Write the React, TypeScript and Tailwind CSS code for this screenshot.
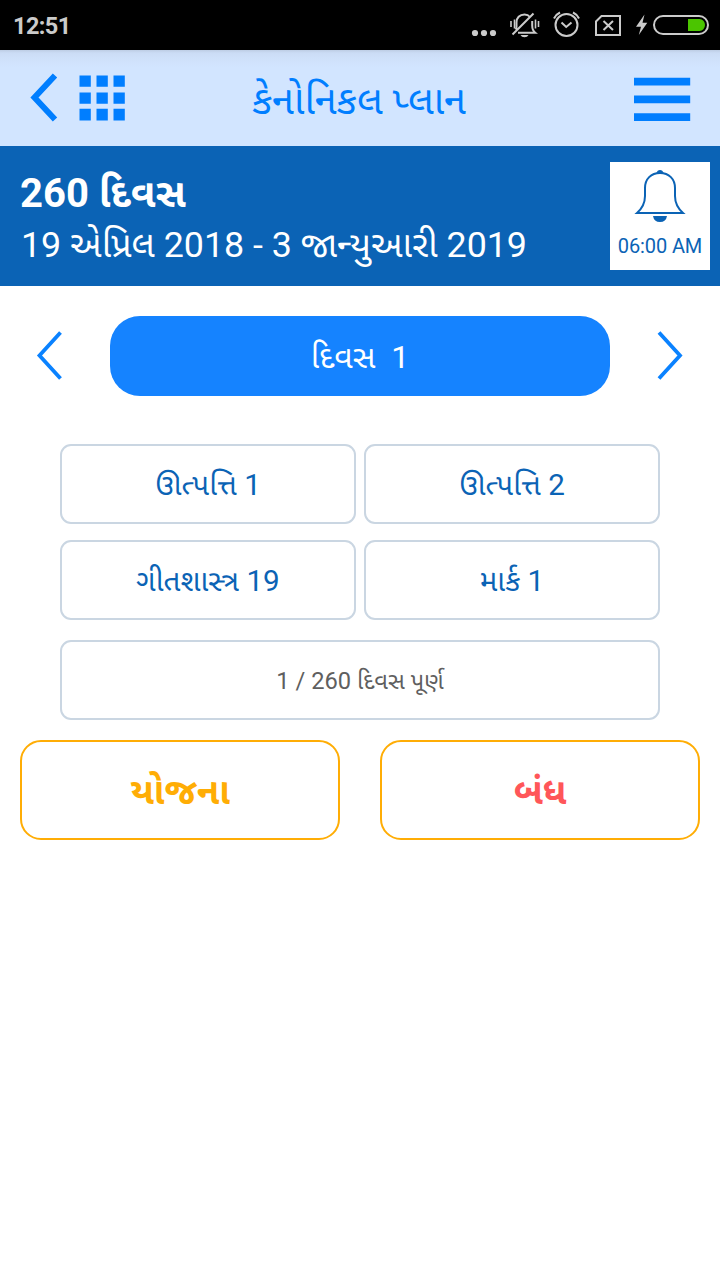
import type { ReactNode } from "react";

function StatusBar() {
  return (
    <div className="flex h-[50px] items-center justify-between bg-black pl-[13px] text-[#cbcbcb]">
      <span className="pt-[2px] text-[23.500px] leading-[28px] font-bold tracking-[-0.6px]">12:51</span>
      <svg width="260" height="50" viewBox="0 0 260 50" fill="none" stroke="#cbcbcb" strokeWidth="2">
        <g fill="#cbcbcb" stroke="none">
          <circle cx="15" cy="33" r="3.1" />
          <circle cx="24" cy="33" r="3.1" />
          <circle cx="33" cy="33" r="3.1" />
          <path d="M60.500 35h8q-1 2.300-4 2.300t-4-2.300z" />
          <path d="M184.500 14.500l-8.500 12.300h5l-2.200 8.200 8.500-12.300h-4.800z" />
        </g>
        <path d="M58 32.800h17.200c-2.200-1.800-3-4-3-7.300v-4.500M70 17c-1.200-1.500-3-2.500-5.500-2.500-5 0-8 3.500-8 8v4q0 1.500-.8 3M73.500 13.500L52.500 34.500" />
        <path d="M51 21v6M54.500 19.500v9M75.500 19.500v9M78.500 21v6" strokeWidth="1.600" />
        <circle cx="106.500" cy="25" r="11" />
        <path d="M101.500 22.500l4.700 4.500 5.300-4.500M94 18.500q2-4.200 6-6M119 18.500q-2-4.200-6-6" />
        <path d="M141.500 16H160v19h-24V21.500zM143.500 21l9.500 9M153 21l-9.500 9" />
        <rect x="194" y="16" width="54" height="18" rx="9" />
        <path d="M228 19h11.500a5.500 6 0 0 1 0 12H228z" fill="#4bc500" stroke="none" />
      </svg>
    </div>
  );
}

function Header() {
  return (
    <header className="flex h-24 items-start justify-between bg-[#d2e5ff] bg-[linear-gradient(to_bottom,#bdcde4_0px,#cbdcf5_3px,#cfe1fa_9px,#d2e5ff_17px)] text-[#007eff]">
      <svg width="140" height="96" viewBox="0 0 140 96" fill="currentColor">
        <path d="M55 25.500L34.500 47.500l20.500 22" fill="none" stroke="currentColor" strokeWidth="6" />
        <path d="M79.500 25.500h11.300v11.300H79.500zM96.500 25.500h11.300v11.300H96.500zM113.500 25.500h11.300v11.300h-11.300zM79.500 42.500h11.300v11.300H79.500zM96.500 42.500h11.300v11.300H96.500zM113.500 42.500h11.300v11.300h-11.300zM79.500 58.700h11.300V70.500H79.500zM96.500 58.700h11.300V70.500H96.500zM113.500 58.700h11.300V70.500h-11.300z" />
      </svg>
      <h1 className="pt-[21px] pr-[2px] text-[39.700px] leading-[60px]">કેનોનિકલ પ્લાન</h1>
      <svg width="140" height="96" viewBox="0 0 140 96" fill="currentColor">
        <path d="M54 27.700h56.200v7.800H54zM54 45.500h56.200v7.800H54zM54 63.200h56.200V71H54z" />
      </svg>
    </header>
  );
}

function PlanSummary() {
  return (
    <section className="flex h-[140px] justify-between bg-[#0b63b5] py-4 pr-[10px] pl-5 text-white">
      <div className="pt-[5px]">
        <p className="text-[40px] leading-[54px] font-bold">260 દિવસ</p>
        <p className="pl-px text-[35.800px] leading-[48px]">19 એપ્રિલ 2018 - 3 જાન્યુઆરી 2019</p>
      </div>
      <button className="flex h-[108px] w-[100px] flex-col items-center bg-white text-[#0b63b5]">
        <svg width="60" height="70" viewBox="0 0 60 70" fill="none" stroke="currentColor" strokeWidth="2">
          <path d="M7 51h46c-5-4.500-8-9.500-8-17V26c0-9-6-15-15-15s-15 6-15 15v8C15 41.500 12 46.500 7 51z" />
          <path d="M26.500 11q.8-3 3.500-3t3.500 3zM23 54h14q-1 6-7 6t-7-6z" fill="currentColor" stroke="none" />
        </svg>
        <span className="text-[20px] leading-[28px] tracking-[-0.1px] whitespace-nowrap">06:00 AM</span>
      </button>
    </section>
  );
}

function Chevron({ d }: { d: string }) {
  return (
    <svg width="110" height="80" viewBox="0 0 110 80" fill="none" stroke="#0a82ff" strokeWidth="3.800">
      <path d={d} />
    </svg>
  );
}

function Chapter({ children }: { children: ReactNode }) {
  return (
    <button className="flex h-20 items-center justify-center rounded-[11px] border-2 border-[#cad6e2] pt-[2px] text-[29.600px] leading-[44px] text-[#0b63b5]">
      {children}
    </button>
  );
}

export default function App() {
  return (
    <div className="flex h-[1280px] w-[720px] flex-col bg-white font-['Roboto','Noto_Sans_Gujarati','Noto_Sans',sans-serif]">
      <StatusBar />
      <Header />
      <PlanSummary />
      <div className="mt-[30px] flex">
        <Chevron d="M60.500 16.500L39.500 39.500l21 23" />
        <div className="flex h-20 w-[500px] items-center justify-center rounded-[30px] bg-[#1583ff] pt-[2px] text-[32px] leading-[48px] whitespace-pre text-white">
          {"દિવસ  1"}
        </div>
        <Chevron d="M49 16.500l21 23-21 23" />
      </div>
      <div className="mx-[60px] mt-12 grid grid-cols-2 gap-x-2 gap-y-4">
        <Chapter>ઊત્પત્તિ 1</Chapter>
        <Chapter>ઊત્પત્તિ 2</Chapter>
        <Chapter>ગીતશાસ્ત્ર 19</Chapter>
        <Chapter>માર્ક 1</Chapter>
      </div>
      <div className="mx-[60px] mt-5 flex h-20 items-center justify-center rounded-[11px] border-2 border-[#cad6e2] pt-[2px] text-[23.700px] leading-[36px] text-[#5f5f5f]">
        1 / 260 દિવસ પૂર્ણ
      </div>
      <div className="mx-5 mt-5 grid grid-cols-2 gap-10 text-[36.500px] leading-[54px] font-bold">
        <button className="flex h-[100px] items-center justify-center rounded-[21px] border-2 border-[#ffad05] pt-[3px] text-[#ffad05]">
          યોજના
        </button>
        <button className="flex h-[100px] items-center justify-center rounded-[21px] border-2 border-[#ffad05] pt-[3px] text-[#ff5659]">
          બંધ
        </button>
      </div>
    </div>
  );
}
